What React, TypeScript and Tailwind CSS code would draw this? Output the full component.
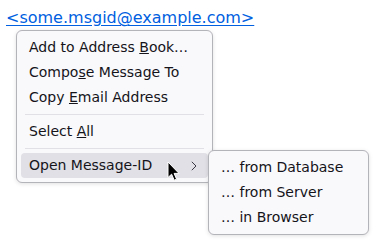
import React from 'react';

const font = { fontFamily: '"DejaVu Sans", "Liberation Sans", sans-serif' };

function Item({ children, active, arrow }: { children: React.ReactNode; active?: boolean; arrow?: boolean }) {
    return (
        <div className={`flex items-center h-[25px] pl-2 pr-[11px] rounded-[4px] ${active ? 'bg-[#e0e0e6]' : ''}`}>
            <span className="flex-1 leading-[25px]">{children}</span>
            {arrow && (
                <svg width="6" height="10" viewBox="0 0 6 10" className="text-[#3a3944]">
                    <path d="M0.8 0.8 L5 5 L0.8 9.2" fill="none" stroke="currentColor" strokeWidth="1" />
                </svg>
            )}
        </div>
    );
}

function Separator() {
    return <div className="h-px my-1 mx-1 bg-[#e0e0e6]" />;
}

export default function App() {
    return (
        <div className="w-[381px] h-[246px] bg-white text-[#15141a] pt-2 pl-[6px]" style={font}>
            <a className="block w-fit text-[16px] leading-[19px] text-[#0060df] underline underline-offset-[2px]">
                &lt;some.msgid@example.com&gt;
            </a>
            <div className="relative ml-[10px] mt-[3px] w-[197px] bg-[#f9f9fb] border border-[#b3b3ba] rounded-[6px] p-1 text-[14px] shadow-[0_1px_4px_rgba(0,0,0,0.12)]">
                <Item>Add to Address <u>B</u>ook…</Item>
                <Item>Compo<u>s</u>e Message To</Item>
                <Item>Copy <u>E</u>mail Address</Item>
                <Separator />
                <Item>Select <u>A</u>ll</Item>
                <Separator />
                <div className="relative">
                    <Item active arrow>Open Message-ID</Item>
                    <div className="absolute left-[187px] top-[-3px] w-[161px] bg-[#f9f9fb] border border-[#b3b3ba] rounded-[6px] p-1 shadow-[0_1px_4px_rgba(0,0,0,0.12)]">
                        <Item>… from Database</Item>
                        <Item>… from Server</Item>
                        <Item>… in Browser</Item>
                    </div>
                    <svg className="absolute left-[146px] top-[8px]" width="13" height="21" viewBox="0 0 13 21">
                        <path d="M1 1 L1 16.5 L4.6 13.2 L7.2 19.2 L9.6 18.2 L7.1 12.4 L12 12.4 Z" fill="#000" stroke="#fff" strokeWidth="1" strokeLinejoin="round" />
                    </svg>
                </div>
            </div>
        </div>
    );
}
